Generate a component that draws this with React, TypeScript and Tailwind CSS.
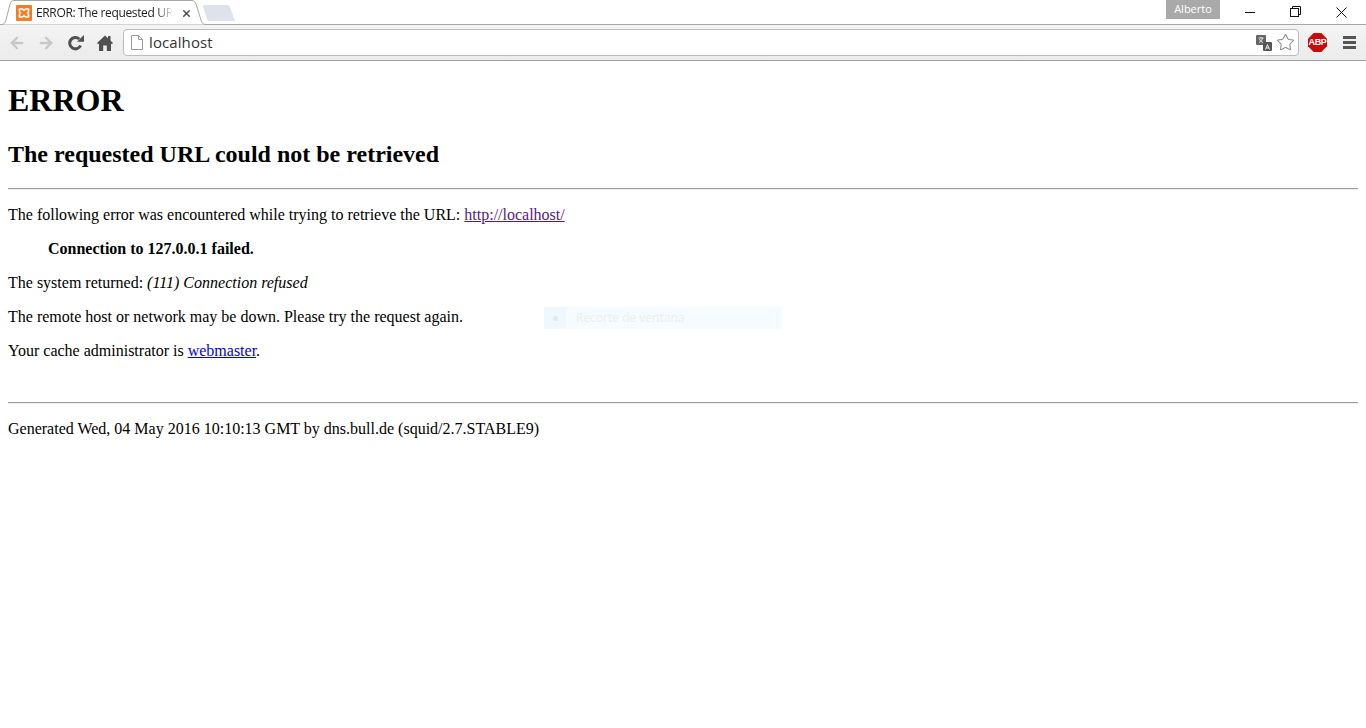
import { ArrowLeft, ArrowRight, X, Star } from 'lucide-react'

function XamppIcon() {
  return (
    <svg viewBox="0 0 16 16" className="h-4 w-4 shrink-0">
      <rect width="16" height="16" rx="1" fill="#f57c1f" />
      <path d="M3.500 4H6.500L8 5.500L9.500 4H12.500V7L11.500 8L12.500 9V12H9.500L8 10.500L6.500 12H3.500V9L4.500 8L3.500 7z" fill="none" stroke="#fff" strokeWidth="1.700" strokeLinejoin="round" />
    </svg>
  )
}

function ReloadIcon() {
  return (
    <svg viewBox="0 0 16 16" className="ml-[13px] h-4 w-4 shrink-0">
      <path d="M12.600 10.500A5.700 5.700 0 1 1 11.300 4" fill="none" stroke="#505050" strokeWidth="3" />
      <path d="M9 6.800H16V0z" fill="#505050" />
    </svg>
  )
}

function HomeIcon() {
  return (
    <svg viewBox="0 0 16 16" className="ml-[13px] h-4 w-4 shrink-0">
      <path d="M8 0.500L11 3.200V1H13.500V5.500L16 8L14.800 9.200L14 8.500V16H9.800V10.500H6.200V16H2V8.500L1.200 9.200L0 8z" fill="#505050" />
    </svg>
  )
}

function TitleBar() {
  return (
    <div className="relative flex h-[25px] items-start border-b border-[#a8a8a8] bg-white">
      <svg width="240" height="25" viewBox="0 0 240 25" className="absolute left-0 top-0">
        <path d="M0 24.500H1.500C4 24.500 5 23 6 20L10 4C10.700 1.700 12 0.500 14 0.500H192C194 0.500 195.300 1.700 196 4L201 20C202 23 203 24.500 206 24.500" fill="#fff" stroke="#a9a9a9" />
        <path d="M203 7C203 5.500 204 5 205.500 5H227C228.500 5 229.300 5.500 229.800 7L235 21H210C208.500 21 207.500 20.500 207 19z" fill="#dee3eb" />
      </svg>
      <div className="relative flex h-[26px] w-[196px] items-center pl-4">
        <XamppIcon />
        <span className="ml-1 w-[137px] whitespace-nowrap text-xs text-[#222] font-['Open_Sans',sans-serif] tracking-[-0.35px] [mask-image:linear-gradient(to_right,black_88%,transparent)]">
          ERROR: The requested UR
        </span>
        <X className="ml-2 h-[11px] w-[11px] text-[#555]" strokeWidth={3.5} />
      </div>
      <div className="absolute left-[1166px] top-0 flex h-[19px] w-[54px] items-center justify-center bg-[#a9a9a9] text-[11px] text-white font-['Open_Sans',sans-serif]">
        Alberto
      </div>
      <div className="absolute left-[1245px] top-[12px] h-px w-[10px] bg-[#111]" />
      <svg viewBox="0 0 11 11" className="absolute left-[1290px] top-[6px] h-[11px] w-[11px]" fill="none" stroke="#111" strokeWidth="1">
        <rect x="0.500" y="2.500" width="8" height="8" />
        <path d="M2.500 2.500V0.500H10.500V8.500H8.500" />
      </svg>
      <svg viewBox="0 0 11 11" className="absolute left-[1336px] top-[7px] h-[11px] w-[11px]" fill="none" stroke="#111" strokeWidth="1">
        <path d="M0.500 0.500L10.500 10.500M10.500 0.500L0.500 10.500" />
      </svg>
    </div>
  )
}

function Toolbar() {
  return (
    <div className="flex h-[36px] items-center border-b border-[#a0a0a0] bg-gradient-to-b from-[#f4f4f4] to-[#ebebeb]">
      <ArrowLeft className="ml-[8px] h-[18px] w-[18px] text-[#c8c8c8]" strokeWidth={3.2} />
      <ArrowRight className="ml-[11px] h-[18px] w-[18px] text-[#c8c8c8]" strokeWidth={3.2} />
      <ReloadIcon />
      <HomeIcon />
      <div className="ml-[10px] flex h-[27px] w-[1176px] items-center rounded-sm border border-[#bcbcbc] bg-white pl-[7px]">
        <svg viewBox="0 0 12 15" className="h-[15px] w-3 shrink-0" fill="#fff" stroke="#9a9a9a">
          <path d="M0.500 0.500H7.500L11.500 4.500V14.500H0.500z" />
          <path d="M7.500 0.500V4.500H11.500" fill="none" />
        </svg>
        <span className="ml-[6px] flex-1 text-[15px] text-[#333] font-['Open_Sans',sans-serif] tracking-[0.1px]">localhost</span>
        <svg viewBox="0 0 16 16" className="mr-[1px] h-4 w-4 shrink-0">
          <rect x="0" y="0" width="10" height="10" rx="1" fill="#666" />
          <path d="M2.500 3h5M5 2v1M3 7.500C5 6.500 6 5 6.500 3M3.500 4c.7 1.700 2 3 3.500 3.500" stroke="#fff" strokeWidth="0.800" fill="none" />
          <rect x="7" y="7" width="9" height="9" rx="1" fill="#555" />
          <path d="M9.500 14.500L11.500 9.500L13.500 14.500M10.200 13H12.800" stroke="#fff" strokeWidth="0.900" fill="none" />
        </svg>
        <Star className="ml-[3px] mr-[3px] h-[19px] w-[19px] text-[#8a8a8a]" strokeWidth={1.3} />
      </div>
      <div className="ml-[9px] flex h-[19px] w-[19px] items-center justify-center bg-[#c80c0c] text-[9px] font-bold tracking-[-0.3px] text-white [clip-path:polygon(30%_0,70%_0,100%_30%,100%_70%,70%_100%,30%_100%,0_70%,0_30%)] font-['Liberation_Sans',sans-serif]">
        ABP
      </div>
      <div className="ml-[16px] flex w-[13px] flex-col gap-[2.5px]">
        <div className="h-[2.500px] bg-[#555]" />
        <div className="h-[2.500px] bg-[#555]" />
        <div className="h-[2.500px] bg-[#555]" />
      </div>
    </div>
  )
}

export default function App() {
  return (
    <div className="relative h-[728px] w-[1366px] overflow-hidden bg-white font-['Liberation_Serif',serif] text-base text-black">
      <TitleBar />
      <Toolbar />
      <div className="px-2 pt-[21px]">
        <h1 className="text-[32px] font-bold leading-[37px]">ERROR</h1>
        <h2 className="mt-[22px] text-2xl font-bold leading-[27px]">The requested URL could not be retrieved</h2>
        <hr className="mt-5 h-0.5 border-0 border-t border-b border-t-[#9a9a9a] border-b-[#eeeeee]" />
        <p className="mt-4 leading-[18px]">
          The following error was encountered while trying to retrieve the URL:{' '}
          <a href="#" className="text-[#551a8b] underline">http://localhost/</a>
        </p>
        <p className="ml-10 mt-4 font-bold leading-[18px]">Connection to 127.0.0.1 failed.</p>
        <p className="mt-4 leading-[18px]">
          The system returned: <i>(111) Connection refused</i>
        </p>
        <p className="mt-4 leading-[18px]">The remote host or network may be down. Please try the request again.</p>
        <p className="mt-4 leading-[18px]">
          Your cache administrator is <a href="#" className="text-[#0000ee] underline">webmaster</a>.
        </p>
        <hr className="mt-[42px] h-0.5 border-0 border-t border-b border-t-[#9a9a9a] border-b-[#eeeeee]" />
        <p className="mt-4 leading-[18px]">Generated Wed, 04 May 2016 10:10:13 GMT by dns.bull.de (squid/2.7.STABLE9)</p>
      </div>
      <div className="absolute left-[544px] top-[307px] flex h-[22px] w-[238px] items-center bg-[#f5fbff] font-['Open_Sans',sans-serif] text-xs text-[#eeeeee]">
        <div className="flex h-full w-[22px] items-center justify-center bg-[#eff7ff]">
          <div className="h-[5px] w-[5px] rounded-full bg-[#e4e8ec]" />
        </div>
        <span className="ml-2.5">Recorte de ventana</span>
      </div>
    </div>
  )
}
